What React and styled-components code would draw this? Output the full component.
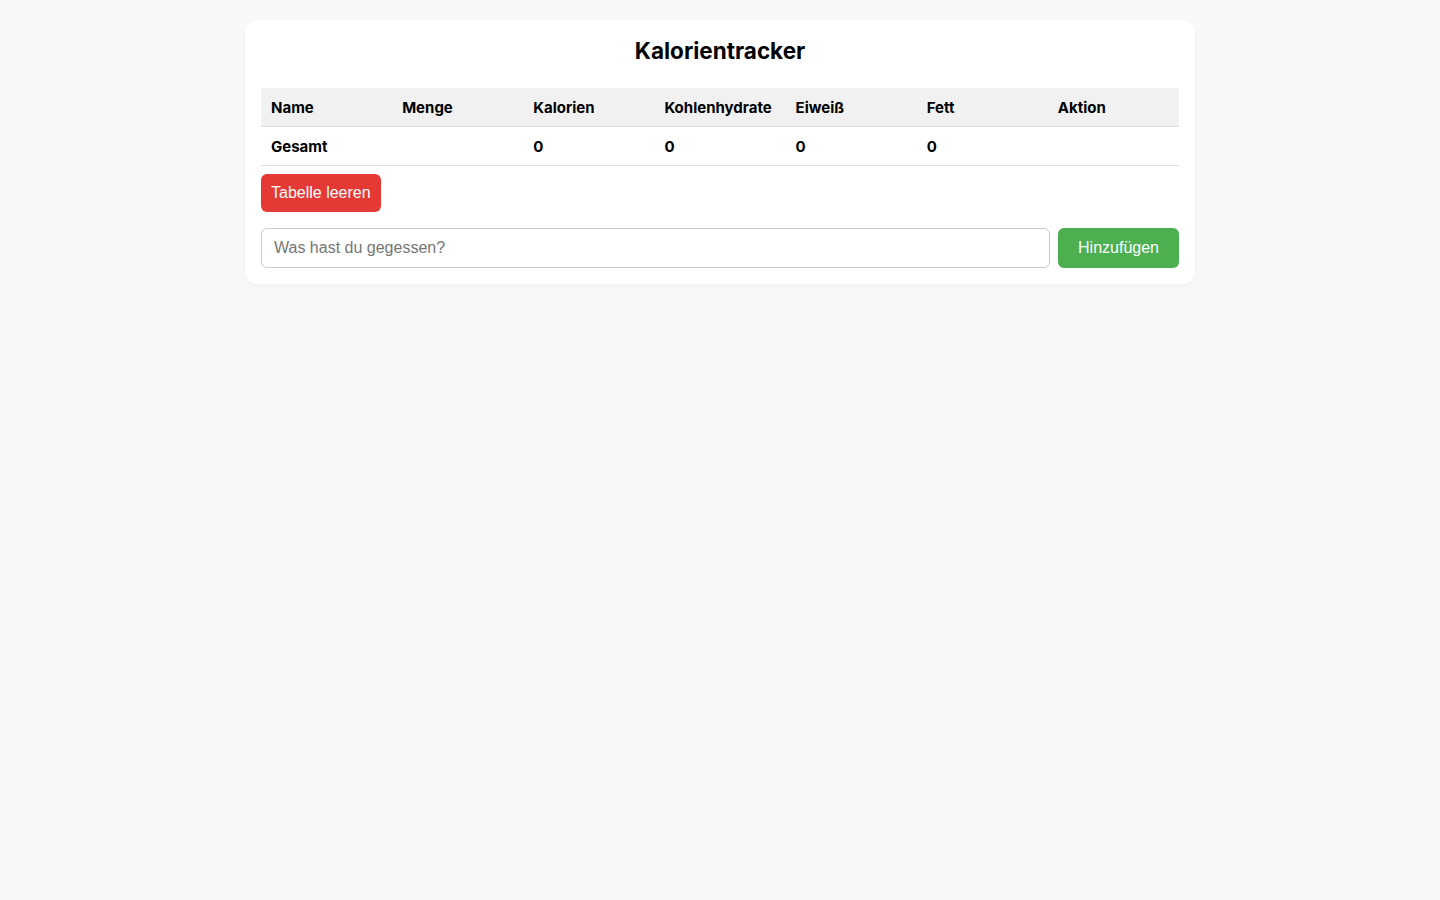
import React, { useState } from 'react'
import styled, { createGlobalStyle } from 'styled-components'

const GlobalStyle = createGlobalStyle`
  body {
    margin: 0;
    background: #f8f8f8;
    font-family: Inter, "Noto Sans", sans-serif;
    color: #000;
  }
`

const Page = styled.div`
  padding: 20px 0;
  display: flex;
  justify-content: center;
`

const Card = styled.div`
  width: 950px;
  box-sizing: border-box;
  background: #fff;
  border-radius: 12px;
  padding: 16px;
  box-shadow: 0 1px 4px rgba(0, 0, 0, 0.04);
`

const Title = styled.h1`
  margin: 1px 0 23px;
  font-size: 22.5px;
  line-height: 28px;
  font-weight: 700;
  text-align: center;
`

const Table = styled.table`
  width: 100%;
  border-collapse: collapse;
  table-layout: fixed;
  font-size: 15px;
`

const Th = styled.th`
  background: #f1f1f1;
  text-align: left;
  font-weight: 700;
  padding: 11px 10px 9px;
  line-height: 18px;
  border-bottom: 1px solid #ddd;
`

const Td = styled.td`
  padding: 11px 10px 9px;
  line-height: 18px;
  font-weight: ${(p) => (p.$bold ? 700 : 400)};
  border-bottom: 1px solid #ddd;
`

const Button = styled.button`
  font-family: "Liberation Sans", Arial, sans-serif;
  font-size: 16px;
  color: #fff;
  border: none;
  border-radius: 6px;
  background: ${(p) => p.$color};
  padding: 0 10px;
  height: ${(p) => p.$height}px;
  cursor: pointer;
`

const ClearButton = styled(Button)`
  margin-top: 8px;
  display: block;
`

const Form = styled.div`
  display: flex;
  gap: 8px;
  margin-top: 16px;
`

const Input = styled.input`
  flex: 1;
  height: 40px;
  box-sizing: border-box;
  border: 1px solid #ccc;
  border-radius: 6px;
  padding: 0 12px;
  font-family: "Liberation Sans", Arial, sans-serif;
  font-size: 16px;
  outline: none;
  &::placeholder {
    color: #757575;
  }
`

const AddButton = styled(Button)`
  padding: 0 20px;
`

const columns = ['Name', 'Menge', 'Kalorien', 'Kohlenhydrate', 'Eiweiß', 'Fett', 'Aktion']

export default function App() {
  const [text, setText] = useState('')
  return (
    <>
      <GlobalStyle />
      <Page>
        <Card>
          <Title>Kalorientracker</Title>
          <Table>
            <thead>
              <tr>
                {columns.map((c) => (
                  <Th key={c}>{c}</Th>
                ))}
              </tr>
            </thead>
            <tbody>
              <tr>
                <Td $bold>Gesamt</Td>
                <Td />
                <Td $bold>0</Td>
                <Td $bold>0</Td>
                <Td $bold>0</Td>
                <Td $bold>0</Td>
                <Td />
              </tr>
            </tbody>
          </Table>
          <ClearButton $color="#e53935" $height={38}>Tabelle leeren</ClearButton>
          <Form>
            <Input
              placeholder="Was hast du gegessen?"
              value={text}
              onChange={(e) => setText(e.target.value)}
            />
            <AddButton $color="#4caf50" $height={40}>Hinzufügen</AddButton>
          </Form>
        </Card>
      </Page>
    </>
  )
}
